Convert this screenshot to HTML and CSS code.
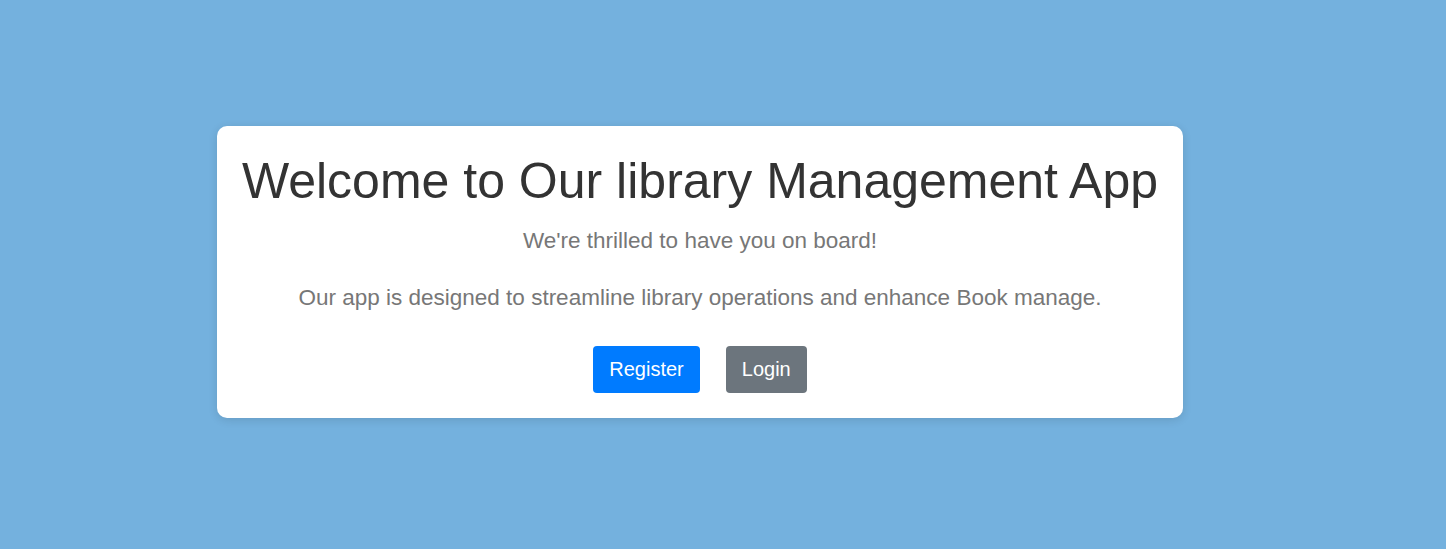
FILE: index.html
```html
<!DOCTYPE html>
<html lang="en">
<head>
<meta charset="utf-8">
<title>Library Management App</title>
<link rel="stylesheet" href="styles.css">
</head>
<body>
<main class="page">
  <section class="card">
    <h1 class="title">Welcome to Our library Management App</h1>
    <p class="lead">We're thrilled to have you on board!</p>
    <p class="lead">Our app is designed to streamline library operations and enhance Book manage.</p>
    <div class="actions">
      <a class="btn btn-primary" href="#">Register</a>
      <a class="btn btn-secondary" href="#">Login</a>
    </div>
  </section>
</main>
</body>
</html>
```
FILE: styles.css
```css
html, body {
  margin: 0;
  padding: 0;
}
body {
  background: #74b1de;
  font-family: "Liberation Sans", Arial, sans-serif;
}
.page {
  min-height: 100vh;
  box-sizing: border-box;
  display: flex;
  align-items: center;
  justify-content: center;
  padding: 0 46px 5px 0;
}
.card {
  background: #fff;
  border-radius: 10px;
  box-shadow: 0 2px 10px rgba(0, 0, 0, 0.12);
  padding: 26px 25px 25px;
  text-align: center;
}
.title {
  margin: 0 0 13px;
  font-size: 50px;
  font-weight: 400;
  line-height: 59px;
  color: #333;
}
.lead {
  margin: 0;
  font-size: 22.5px;
  line-height: 34px;
  color: #777;
}
.lead + .lead {
  margin-top: 23px;
}
.actions {
  display: flex;
  justify-content: center;
  gap: 26px;
  margin-top: 31px;
}
.btn {
  display: inline-block;
  padding: 8px 16px;
  font-size: 20px;
  line-height: 31px;
  border-radius: 4px;
  color: #fff;
  text-decoration: none;
}
.btn-primary {
  background: #007bff;
}
.btn-secondary {
  background: #6c757d;
}
```
